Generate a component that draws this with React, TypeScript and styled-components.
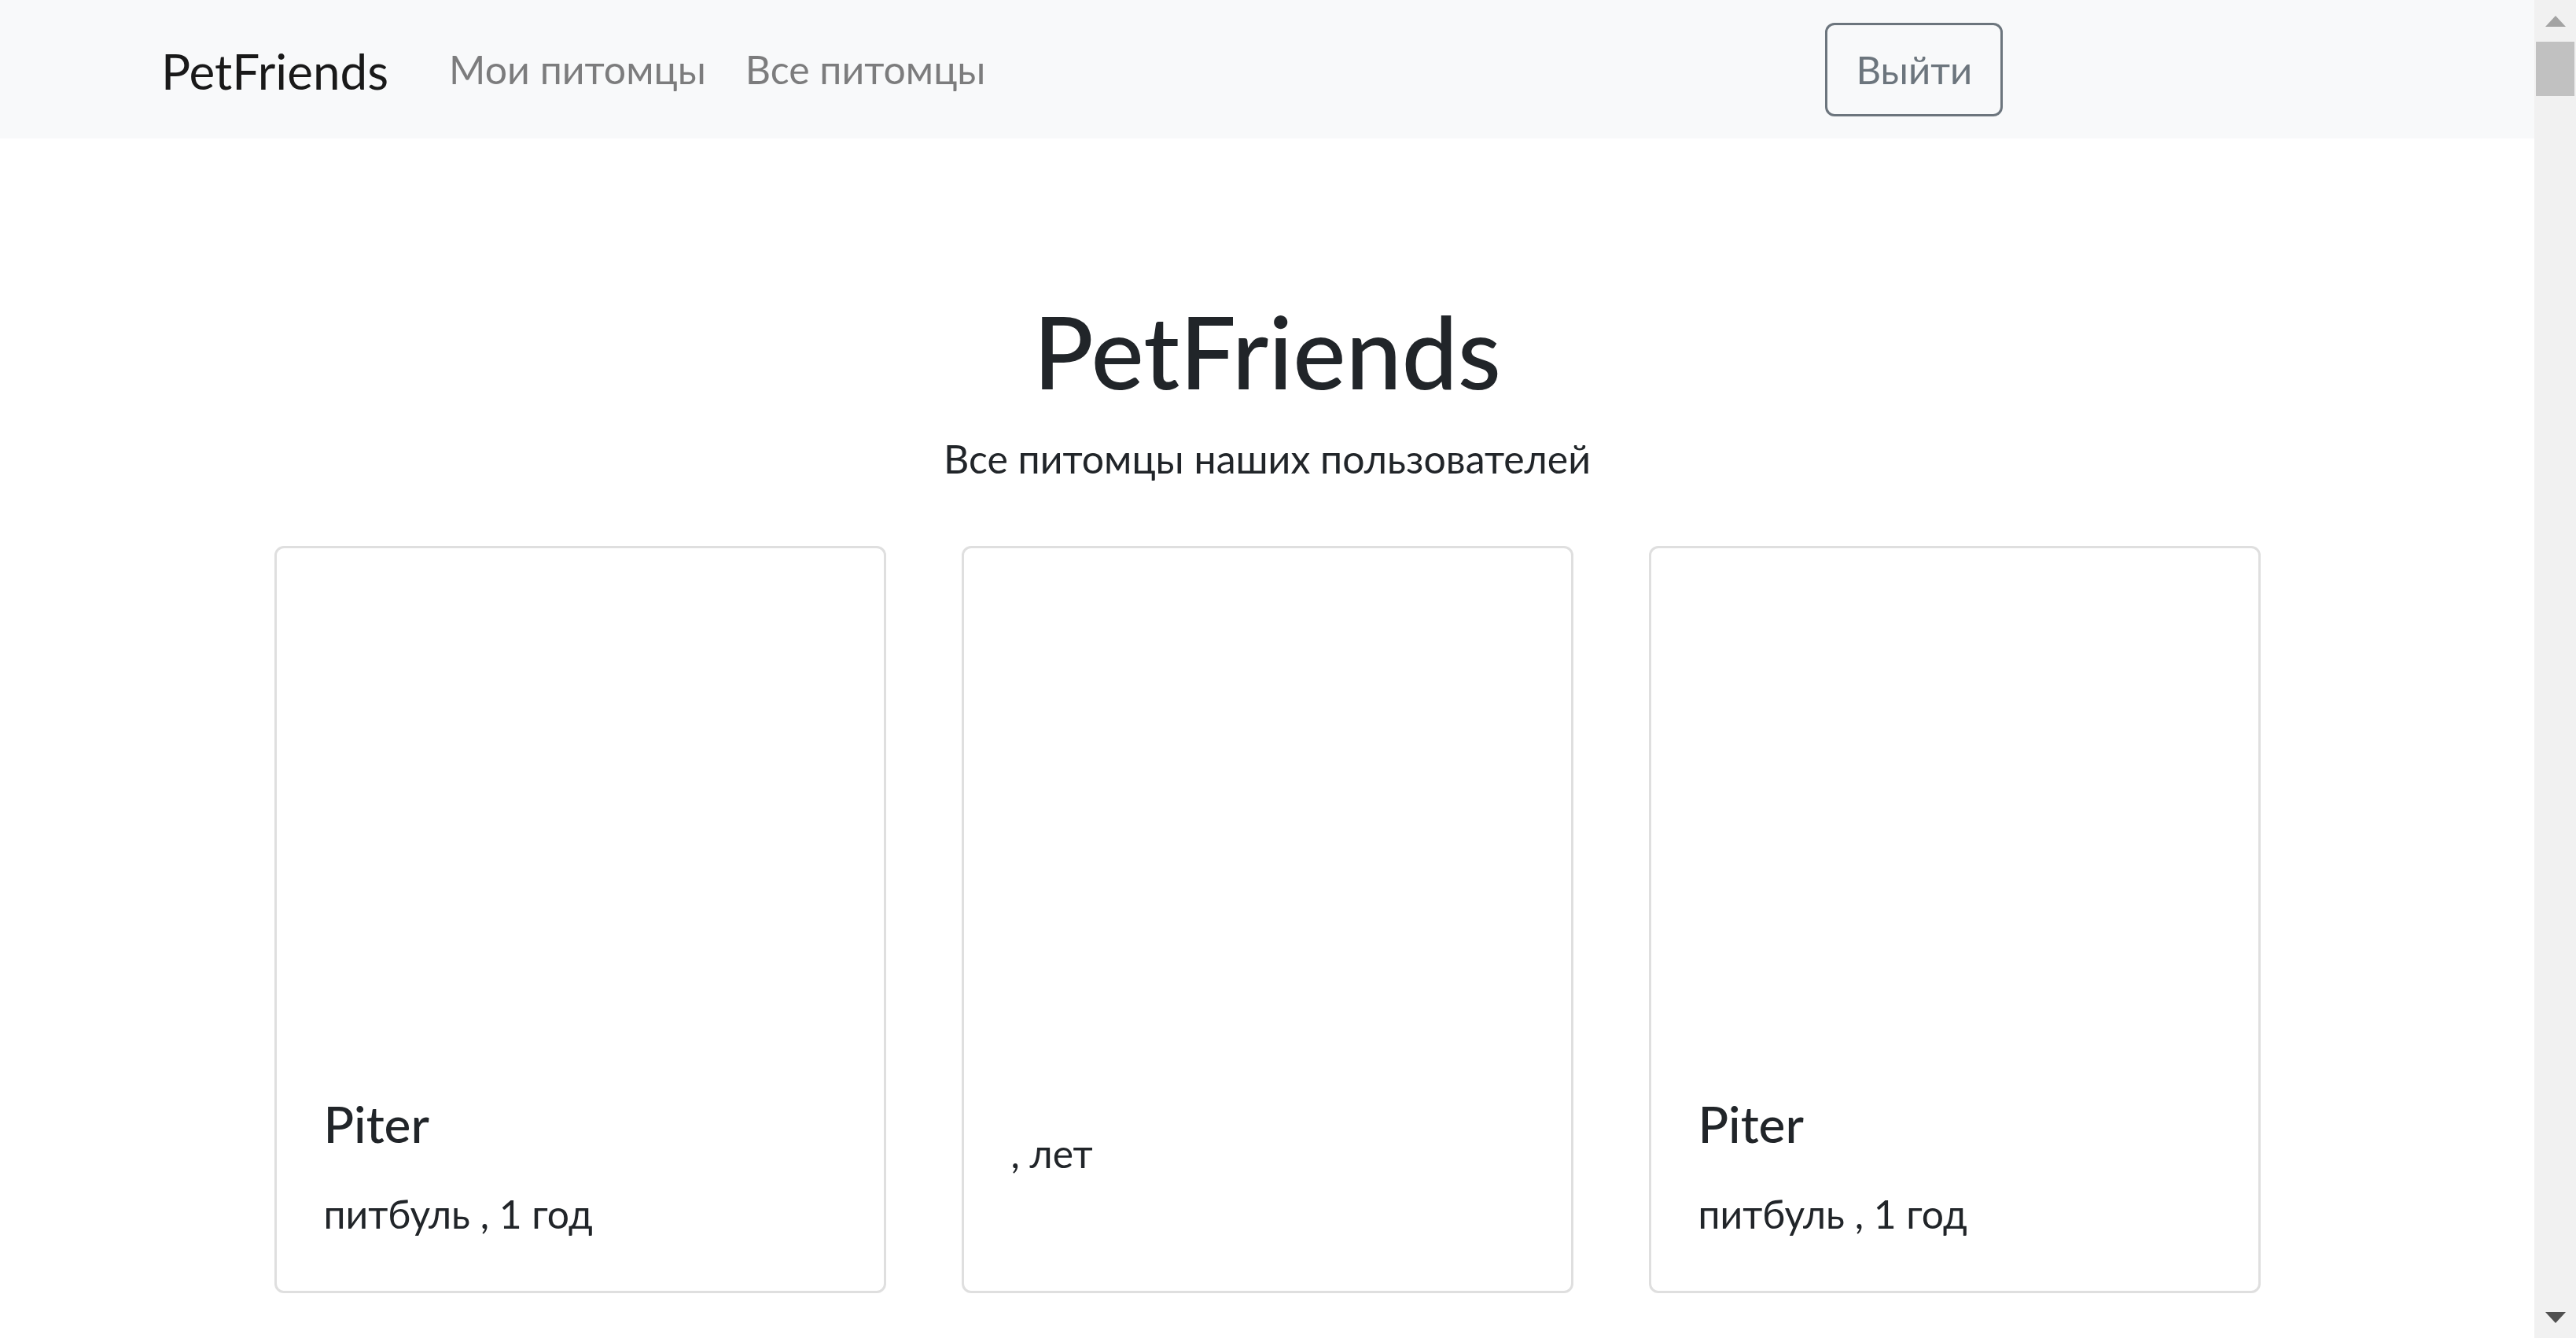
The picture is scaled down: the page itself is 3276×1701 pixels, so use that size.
import React from "react";
import styled, { createGlobalStyle } from "styled-components";

const GlobalStyle = createGlobalStyle`
  html, body {
    margin: 0;
    padding: 0;
    overflow: hidden;
    background: #ffffff;
    font-family: "Lato", "Noto Sans", "Liberation Sans", sans-serif;
    color: #212529;
  }
  * { box-sizing: border-box; }
`;

const Page = styled.div`
  display: flex;
  width: 100vw;
  height: 1701px;
`;

const Main = styled.main`
  flex: 1;
  min-width: 0;
  display: flex;
  flex-direction: column;
  background: #ffffff;
`;

const Navbar = styled.nav`
  height: 176px;
  flex-shrink: 0;
  background: #f8f9fa;
  display: flex;
  align-items: center;
  padding-left: 205px;
`;

const Brand = styled.a`
  font-size: 62px;
  line-height: 90px;
  padding-top: 4px;
  color: rgba(0, 0, 0, 0.9);
  text-decoration: none;
  white-space: nowrap;
  margin-right: 77px;
`;

const NavList = styled.ul`
  display: flex;
  gap: 50px;
  list-style: none;
  margin: 0;
  padding: 0;
`;

const NavLink = styled.a`
  display: block;
  font-size: 50px;
  line-height: 75px;
  color: rgba(0, 0, 0, 0.5);
  text-decoration: none;
  white-space: nowrap;
`;

const LogoutButton = styled.button`
  margin-left: 1068px;
  height: 119px;
  padding: 0 36px;
  border: 3px solid #6c757d;
  border-radius: 12px;
  background: transparent;
  color: #6c757d;
  font-family: "Lato", "Noto Sans", sans-serif;
  font-size: 49px;
  line-height: 74px;
  cursor: pointer;
  white-space: nowrap;
`;

const Hero = styled.section`
  padding-top: 194px;
  text-align: center;
`;

const Title = styled.h1`
  margin: 0;
  font-size: 127px;
  line-height: 1.2;
  font-weight: 500;
  color: #212529;
`;

const Subtitle = styled.p`
  margin: 24px 0 0;
  font-size: 50px;
  line-height: 1.5;
  color: #212529;
`;

const CardGrid = styled.div`
  margin-top: 73px;
  display: grid;
  grid-template-columns: repeat(3, 778px);
  gap: 96px;
  justify-content: center;
`;

const Card = styled.div`
  height: 950px;
  border: 3px solid #dfdfdf;
  border-radius: 12px;
  background: #ffffff;
  display: flex;
  flex-direction: column;
  overflow: hidden;
`;

const CardImage = styled.div`
  height: 633px;
  flex-shrink: 0;
`;

const CardBody = styled.div`
  padding: 60px;
`;

const CardTitle = styled.h5`
  margin: 0 0 39px;
  font-size: 64px;
  line-height: 77px;
  font-weight: 500;
  color: #212529;
`;

const CardText = styled.p`
  margin: 0;
  font-size: 49.8px;
  line-height: 74.25px;
  color: #212529;
  white-space: pre;
`;

const Scrollbar = styled.div`
  width: 53px;
  flex-shrink: 0;
  background: #f1f1f1;
  display: flex;
  flex-direction: column;
  align-items: center;
`;

const ArrowButton = styled.div`
  height: 53px;
  width: 100%;
  display: flex;
  align-items: center;
  justify-content: center;
  flex-shrink: 0;
`;

const Thumb = styled.div`
  width: 49px;
  height: 69px;
  background: #c1c1c1;
`;

const Track = styled.div`
  flex: 1;
`;

type Pet = { name: string; info: string };

const pets: Pet[] = [
  { name: "Piter", info: "питбуль , 1 год" },
  { name: "", info: ", лет" },
  { name: "Piter", info: "питбуль , 1 год" },
];

function Triangle({ up, color }: { up: boolean; color: string }) {
  return (
    <svg width="26" height="14" viewBox="0 0 26 14">
      <polygon points={up ? "13,0 26,14 0,14" : "0,0 26,0 13,14"} fill={color} />
    </svg>
  );
}

export default function App() {
  return (
    <>
      <GlobalStyle />
      <Page>
        <Main>
          <Navbar>
            <Brand href="#">PetFriends</Brand>
            <NavList>
              <li>
                <NavLink href="#">Мои питомцы</NavLink>
              </li>
              <li>
                <NavLink href="#">Все питомцы</NavLink>
              </li>
            </NavList>
            <LogoutButton type="button">Выйти</LogoutButton>
          </Navbar>
          <Hero>
            <Title>PetFriends</Title>
            <Subtitle>Все питомцы наших пользователей</Subtitle>
          </Hero>
          <CardGrid>
            {pets.map((p, i) => (
              <Card key={i}>
                <CardImage />
                <CardBody>
                  <CardTitle>{p.name}</CardTitle>
                  <CardText>{p.info}</CardText>
                </CardBody>
              </Card>
            ))}
          </CardGrid>
        </Main>
        <Scrollbar>
          <ArrowButton>
            <Triangle up color="#a3a3a3" />
          </ArrowButton>
          <Thumb />
          <Track />
          <ArrowButton>
            <Triangle up={false} color="#505050" />
          </ArrowButton>
        </Scrollbar>
      </Page>
    </>
  );
}
